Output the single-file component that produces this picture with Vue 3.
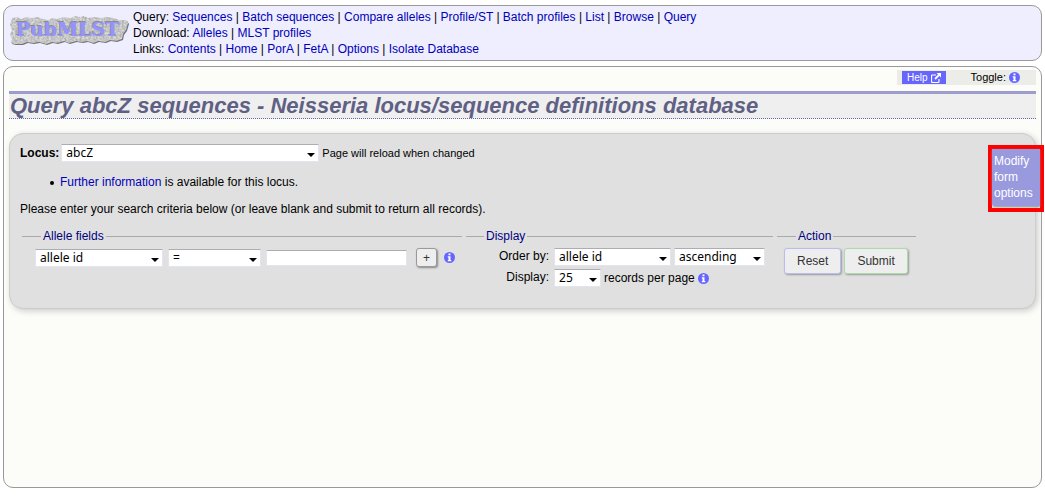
<script setup>
import { ref } from 'vue'

const menus = [
  { label: 'Query', links: ['Sequences', 'Batch sequences', 'Compare alleles', 'Profile/ST', 'Batch profiles', 'List', 'Browse', 'Query'] },
  { label: 'Download', links: ['Alleles', 'MLST profiles'] },
  { label: 'Links', links: ['Contents', 'Home', 'PorA', 'FetA', 'Options', 'Isolate Database'] },
]
const locus = ref('abcZ')
const field = ref('allele id')
const operator = ref('=')
const term = ref('')
const order = ref('allele id')
const direction = ref('ascending')
const pageSize = ref('25')
</script>

<template>
  <div class="page">
    <header class="banner">
      <a href="#" class="logo" aria-label="PubMLST">
        <svg width="122" height="34" viewBox="0 0 122 34">
          <defs>
            <filter id="stone" x="-5%" y="-10%" width="110%" height="125%" color-interpolation-filters="sRGB">
              <feTurbulence type="fractalNoise" baseFrequency="0.45" numOctaves="2" seed="4" result="n" />
              <feColorMatrix in="n" type="matrix" values="0.35 0 0 0 0.6  0.35 0 0 0 0.6  0.35 0 0 0 0.6  0 0 0 0 1" result="g" />
              <feComposite in="g" in2="SourceGraphic" operator="in" result="t" />
              <feDropShadow in="t" dx="1" dy="1" stdDeviation="0.5" flood-color="#555555" flood-opacity="0.8" />
            </filter>
          </defs>
          <path filter="url(#stone)" d="M3 3 L8 2 L12 4 L17 2 L23 3 L28 2 L34 4 L39 5 L43 3 L48 4 L55 2 L61 3 L66 1 L71 2 L75 1 L79 3 L86 2 L92 3 L98 2 L105 3 L110 5 L117 5 L119 8 L117 15 L114 19 L113 24 L107 26 L101 25 L96 27 L89 26 L84 28 L78 26 L73 27 L67 26 L60 28 L55 26 L48 28 L43 27 L37 29 L30 27 L24 28 L18 27 L13 29 L6 29 L2 28 L3 24 L1 20 L3 15 L1 10 Z" />
          <text class="logo-shade" x="6" y="20">PubMLST</text>
          <text class="logo-text" x="7" y="21">PubMLST</text>
        </svg>
      </a>
      <nav class="menus">
        <div v-for="menu in menus" :key="menu.label">
          {{ menu.label }}:
          <template v-for="(link, i) in menu.links" :key="link"><template v-if="i"> | </template><a href="#">{{ link }}</a></template>
        </div>
      </nav>
    </header>

    <main class="content">
      <div class="toolbar">
        <a href="#" class="help">Help
          <svg width="10" height="10" viewBox="0 0 10 10" fill="none" stroke="#fff">
            <path d="M5 2H1.5Q.5 2 .5 3V8.500Q.5 9.500 1.500 9.500H7Q8 9.500 8 8.500V6" stroke-width="1.200" />
            <path d="M4 6L8.500 1.500" stroke-width="1.800" />
            <path d="M5.500 0H10V4.500Z" fill="#fff" stroke="none" />
          </svg>
        </a>
        <span class="toggle">Toggle:
          <button type="button" class="info" aria-label="Toggle tooltips">
            <svg width="11" height="11" viewBox="0 0 11 11"><circle cx="5.500" cy="5.500" r="5.500" /><path d="M4.500 1.500H6.500V3.200H4.500ZM3.800 4.200H6.500V8H7.300V9.200H3.800V8H4.500V5.400H3.800Z" /></svg>
          </button>
        </span>
      </div>

      <h1>Query abcZ sequences - Neisseria locus/sequence definitions database</h1>

      <form class="panel" @submit.prevent>
        <div class="locus">
          <label for="locus">Locus:</label>
          <span class="pick w-locus"><select id="locus" v-model="locus"><option>abcZ</option></select></span>
          <span class="note">Page will reload when changed</span>
        </div>
        <ul><li><a href="#">Further information</a> is available for this locus.</li></ul>
        <p>Please enter your search criteria below (or leave blank and submit to return all records).</p>

        <div class="sets">
          <fieldset class="fields">
            <legend>Allele fields</legend>
            <div class="line">
              <span class="pick w-field"><select v-model="field" aria-label="Field"><option>allele id</option></select></span>
              <span class="pick w-op"><select v-model="operator" aria-label="Operator"><option>=</option></select></span>
              <input v-model="term" type="text" aria-label="Value" />
              <button type="button" class="add" aria-label="Add field">+</button>
              <button type="button" class="info" aria-label="Search help">
                <svg width="11" height="11" viewBox="0 0 11 11"><circle cx="5.500" cy="5.500" r="5.500" /><path d="M4.500 1.500H6.500V3.200H4.500ZM3.800 4.200H6.500V8H7.300V9.200H3.800V8H4.500V5.400H3.800Z" /></svg>
              </button>
            </div>
          </fieldset>

          <fieldset class="display">
            <legend>Display</legend>
            <div class="grid">
              <label for="order">Order by:</label>
              <div class="line tight">
                <span class="pick w-order"><select id="order" v-model="order"><option>allele id</option></select></span>
                <span class="pick w-dir"><select v-model="direction" aria-label="Direction"><option>ascending</option></select></span>
              </div>
              <label for="size">Display:</label>
              <div class="line tight">
                <span class="pick w-size"><select id="size" v-model="pageSize"><option>25</option></select></span>
                <span>records per page</span>
                <button type="button" class="info" aria-label="Display help">
                  <svg width="11" height="11" viewBox="0 0 11 11"><circle cx="5.500" cy="5.500" r="5.500" /><path d="M4.500 1.500H6.500V3.200H4.500ZM3.800 4.200H6.500V8H7.300V9.200H3.800V8H4.500V5.400H3.800Z" /></svg>
                </button>
              </div>
            </div>
          </fieldset>

          <fieldset class="action">
            <legend>Action</legend>
            <div class="line tight">
              <button type="reset" class="big reset">Reset</button>
              <button type="submit" class="big submit">Submit</button>
            </div>
          </fieldset>
        </div>
      </form>

      <div class="marker"><a href="#" class="modify">Modify form options</a></div>
    </main>
  </div>
</template>

<style>
body {
  background: #fff;
}
</style>

<style scoped>
* {
  box-sizing: border-box;
}
.page {
  display: flex;
  flex-direction: column;
  gap: 5px;
  min-height: 100vh;
  padding: 5px 3px 12px;
  font: 12px/16px "Liberation Sans", Arial, sans-serif;
  color: #000;
}
a {
  color: #0000b8;
  text-decoration: none;
}
.banner {
  display: flex;
  gap: 2px;
  padding: 3px 5px;
  background: #eeeeff;
  border: 1px solid #999;
  border-radius: 10px;
}
.logo {
  padding-top: 6px;
  height: 48px;
}
.logo svg {
  display: block;
}
.logo-text,
.logo-shade {
  font: bold 19px "DejaVu Serif", serif;
  fill: #9494fa;
}
.logo-shade {
  fill: #8a8a96;
}
.content {
  position: relative;
  flex: 1;
  padding: 3px 5px;
  background: #fcfdf8;
  border: 1px solid #999;
  border-radius: 10px;
}
.toolbar {
  display: flex;
  align-items: center;
  justify-content: space-between;
  width: 139px;
  height: 15px;
  margin-left: auto;
  padding: 0 16px 0 5px;
  background: #ecede9;
  font-size: 11px;
  line-height: 13px;
}
.help {
  display: flex;
  align-items: center;
  gap: 3px;
  padding: 0 5px;
  background: #6666ff;
  color: #fff;
  font-size: 10px;
}
.toggle {
  display: flex;
  align-items: center;
  gap: 3px;
}
.info {
  display: block;
  width: 11px;
  height: 11px;
  padding: 0;
  border: 0;
  background: none;
}
.info svg {
  display: block;
  fill: #6666ff;
}
.info path {
  fill: #fff;
}
h1 {
  margin: 6px 0 14px;
  padding: 0 1px;
  border-top: 3px solid #9c9ccf;
  border-bottom: 1px dotted #6666aa;
  background: #efefef;
  color: #606085;
  font: italic bold 22px/24px "Liberation Sans", Arial, sans-serif;
}
.panel {
  min-height: 176px;
  padding: 10px;
  background: #e0e0e0;
  border: 1px solid #ccc;
  border-radius: 14px;
  box-shadow: 2px 2px 6px #ccc;
}
.locus {
  display: flex;
  align-items: center;
  gap: 2px;
}
.locus label {
  font-weight: bold;
}
.note {
  padding-left: 1px;
  font-size: 11px;
}
ul {
  margin: 12px 0 11px;
  padding-left: 30px;
  list-style: none;
}
li::before {
  content: "";
  display: inline-block;
  width: 4px;
  height: 4px;
  margin-right: 6px;
  border-radius: 50%;
  background: #000;
  vertical-align: middle;
}
p {
  margin: 0 0 11px;
}
.pick {
  position: relative;
  flex: none;
}
.pick::after {
  content: "";
  position: absolute;
  right: 4px;
  top: 9px;
  border: 4px solid transparent;
  border-top-color: #000;
  border-bottom: 0;
  pointer-events: none;
}
select,
input {
  display: block;
  width: 100%;
  height: 18px;
  margin: 0;
  padding: 0 4px;
  appearance: none;
  background: #fff;
  border: 1px solid #e3e5ee;
  border-top-color: #abadb3;
  border-radius: 1px;
  color: #000;
  font: 12px/16px "Noto Sans", sans-serif;
}
input {
  width: 141px;
  height: 16px;
}
.w-locus { width: 258px; }
.w-field { width: 128px; }
.w-op { width: 93px; }
.w-order { width: 117px; }
.w-dir { width: 91px; }
.w-size { width: 47px; }
.sets {
  display: flex;
  align-items: flex-start;
  gap: 4px;
  padding-left: 2px;
}
fieldset {
  min-width: 0;
  margin: 0;
  padding: 4px 8px 0 7px;
  border: 0;
  border-top: 1px solid #aaa;
}
legend {
  margin-left: 12px;
  padding: 0 2px;
  color: #000080;
}
.line {
  display: flex;
  align-items: center;
  gap: 5px;
}
.line.tight {
  gap: 3px;
}
.fields {
  padding-left: 13px;
  padding-right: 7px;
}
.fields legend {
  margin-left: 6px;
}
.display {
  padding-left: 33px;
}
.display legend {
  margin-left: -15px;
}
.grid {
  display: grid;
  grid-template-columns: auto auto;
  gap: 3px 5px;
}
.grid label {
  text-align: right;
}
.add {
  width: 21px;
  height: 19px;
  margin: 0 2px 0 4px;
  padding: 0;
  background: #eee;
  border: 1px solid #999;
  border-radius: 3px;
  box-shadow: 1px 1px 2px #888;
  color: #333;
  font: 12px/14px "Liberation Sans", Arial, sans-serif;
}
.big {
  height: 26px;
  padding: 0 12px;
  background: #eee;
  border: 1px solid #bbe;
  border-radius: 3px;
  box-shadow: 1px 1px 2px #999;
  color: #333;
  font: 12px/16px "Liberation Sans", Arial, sans-serif;
}
.submit {
  border-color: #aadcaa;
}
.marker {
  position: absolute;
  top: 78px;
  right: -3px;
  width: 56px;
  height: 67px;
  border: 4px solid #f00;
}
.modify {
  display: block;
  height: 57px;
  padding: 4px 2px;
  border-bottom-left-radius: 4px;
  background: #9999dd;
  box-shadow: 0 1px 2px #999;
  color: #fff;
}
</style>
